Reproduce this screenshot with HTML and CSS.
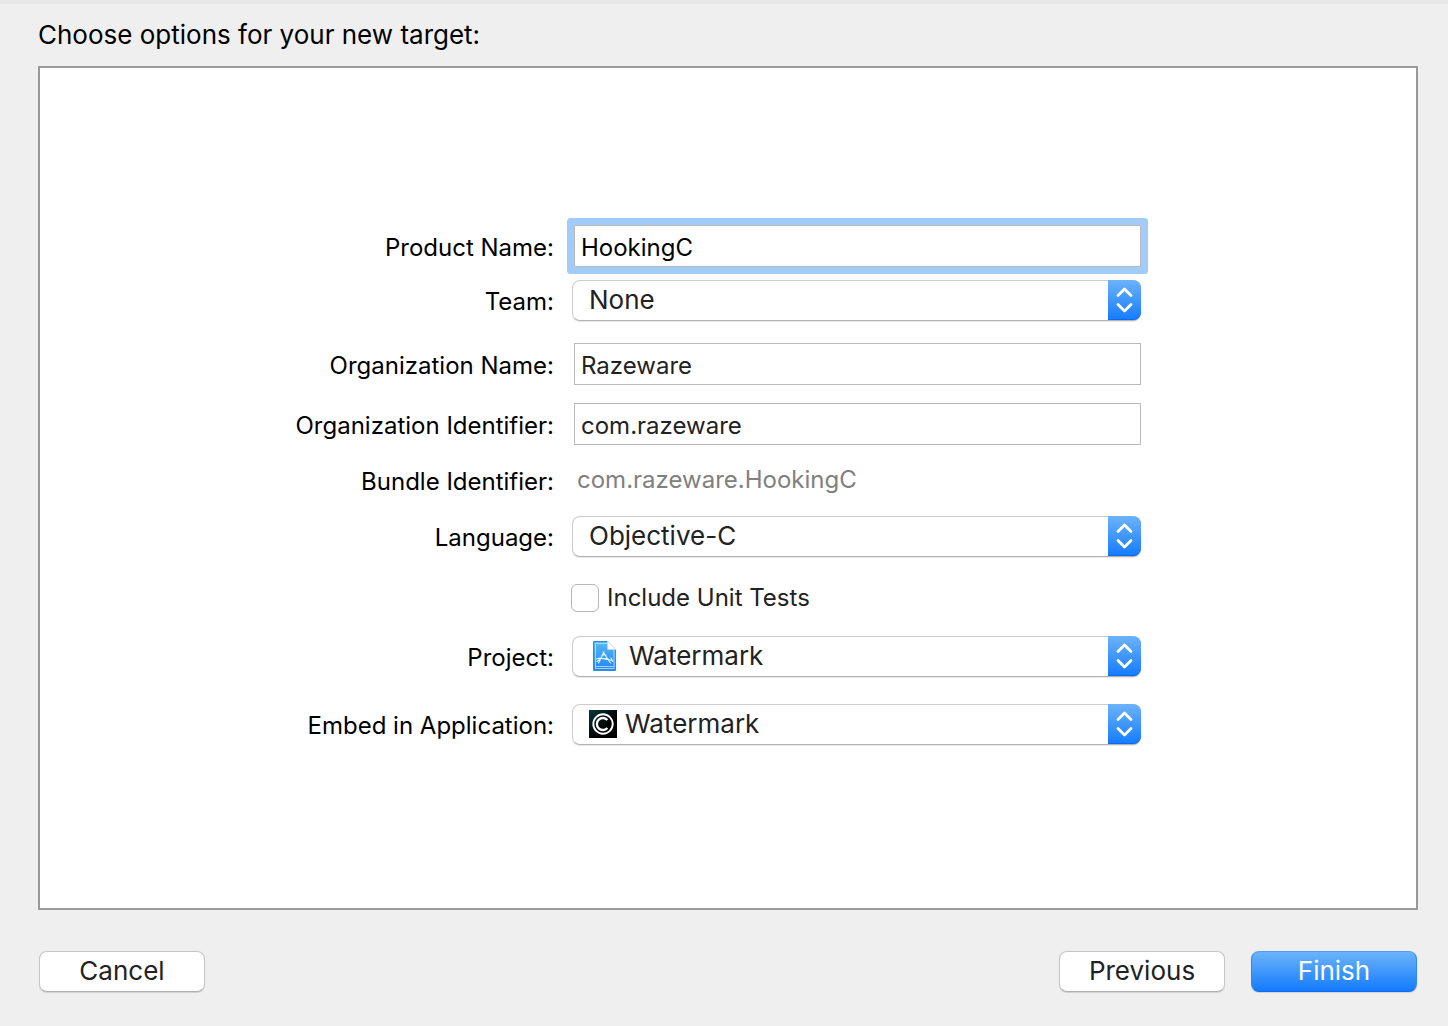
FILE: index.html
```html
<!DOCTYPE html>
<html lang="en">
<head>
<meta charset="utf-8">
<meta name="viewport" content="width=device-width, initial-scale=1">
<title>New Target</title>
<link rel="stylesheet" href="styles.css">
</head>
<body>
<svg class="sprite" aria-hidden="true">
  <symbol id="stepper" viewBox="0 0 33 40">
    <path d="M10 15.500l6.500-6.500 6.500 6.500M10 24.500l6.500 6.500 6.500-6.500" fill="none" stroke="#fff" stroke-width="2.800" stroke-linecap="round" stroke-linejoin="round"/>
  </symbol>
</svg>
<form class="sheet">
  <h1 class="title">Choose options for your new target:</h1>
  <main class="panel">
    <div class="row">
      <label class="label" for="product">Product Name:</label>
      <input class="field focused" id="product" type="text" value="HookingC">
    </div>
    <div class="row tight">
      <label class="label" for="team">Team:</label>
      <div class="popup">
        <select class="select" id="team"><option>None</option></select>
        <svg class="stepper" aria-hidden="true"><use href="#stepper"/></svg>
      </div>
    </div>
    <div class="row loose">
      <label class="label" for="org">Organization Name:</label>
      <input class="field" id="org" type="text" value="Razeware">
    </div>
    <div class="row medium">
      <label class="label" for="orgid">Organization Identifier:</label>
      <input class="field" id="orgid" type="text" value="com.razeware">
    </div>
    <div class="row">
      <label class="label" for="bundle">Bundle Identifier:</label>
      <output class="value" id="bundle">com.razeware.HookingC</output>
    </div>
    <div class="row">
      <label class="label" for="language">Language:</label>
      <div class="popup">
        <select class="select" id="language"><option>Objective-C</option></select>
        <svg class="stepper" aria-hidden="true"><use href="#stepper"/></svg>
      </div>
    </div>
    <div class="row checks">
      <label class="check"><input class="box" type="checkbox">Include Unit Tests</label>
    </div>
    <div class="row">
      <label class="label" for="project">Project:</label>
      <div class="popup">
        <svg class="icon" viewBox="0 0 32 32" aria-hidden="true">
          <defs><linearGradient id="doc" x2="0" y2="1"><stop stop-color="#55b9f3"/><stop offset="1" stop-color="#2186f5"/></linearGradient></defs>
          <path d="M6.500 1.500h14l8 8v21h-22z" fill="url(#doc)" stroke="#2c8fe0"/>
          <path d="M8.500 3.500h11.500l7 7v18H8.500zM8.500 26.500h18" fill="none" stroke="#c4e6ff" stroke-width=".8"/>
          <path d="M20.500 1l8.500 8.500h-8.500z" fill="#fff" stroke="#c9d5df" stroke-width=".7"/>
          <path d="M17 12l-5.500 11M16 12l7.500 11M9.500 19l3-1 13 2.500M15 15h4M10 21.500l4-3M24 18l1.500 3.500M14 18.500h7" fill="none" stroke="#e4f5ff" stroke-width="1.100" stroke-linecap="round"/>
        </svg>
        <select class="select with-doc" id="project"><option>Watermark</option></select>
        <svg class="stepper" aria-hidden="true"><use href="#stepper"/></svg>
      </div>
    </div>
    <div class="row wide">
      <label class="label" for="embed">Embed in Application:</label>
      <div class="popup">
        <svg class="icon" viewBox="0 0 32 32" aria-hidden="true">
          <defs><linearGradient id="app" x2="1" y2="1"><stop stop-color="#063a3c"/><stop offset=".6" stop-color="#000"/></linearGradient></defs>
          <path d="M2 2h28v28H2z" fill="url(#app)"/>
          <circle cx="16" cy="16" r="9.700" fill="none" stroke="#fff" stroke-width="1.900"/>
          <path d="M20.400 12a6 6 0 1 0 0 8" fill="none" stroke="#fff" stroke-width="2.300"/>
        </svg>
        <select class="select with-app" id="embed"><option>Watermark</option></select>
        <svg class="stepper" aria-hidden="true"><use href="#stepper"/></svg>
      </div>
    </div>
  </main>
  <footer class="actions">
    <button class="button" type="button">Cancel</button>
    <div class="forward">
      <button class="button" type="button">Previous</button>
      <button class="button primary" type="submit">Finish</button>
    </div>
  </footer>
</form>
</body>
</html>
```
FILE: styles.css
```css
* { box-sizing: border-box; }

body {
  margin: 0;
  background: #efefef;
  color: #000;
  font: 24px/30px Inter, "Liberation Sans", sans-serif;
}

.sprite { display: none; }

.sheet {
  display: flex;
  flex-direction: column;
  min-height: 100vh;
  padding: 16px 30px 34px 38px;
  border-top: 4px solid #e6e6e6;
}

.title {
  margin: 0 0 16px;
  font-size: 26px;
  font-weight: 400;
  line-height: 30px;
}

.panel {
  flex: 1;
  padding: 157px 275px 156px 0;
  border: 2px solid #999;
  background: #fff;
}

.row {
  display: grid;
  grid-template-columns: 1fr 569px;
  column-gap: 18px;
  align-items: center;
  height: 42px;
  margin-top: 14px;
}
.row:first-child { margin-top: 0; }
.tight { margin-top: 12px; }
.medium { margin-top: 18px; }
.checks { margin-top: 20px; margin-bottom: 16px; }
.checks + .row { margin-top: 0; }
.loose { margin-top: 22px; }
.wide { margin-top: 26px; }

.label {
  padding-top: 4px;
  text-align: right;
  white-space: nowrap;
}

.field {
  height: 42px;
  min-width: 0;
  margin: 0 0 0 2px;
  padding: 2px 6px 0;
  border: 1px solid #bbb;
  border-radius: 0;
  outline: 0;
  background: #fff;
  color: #222;
  font: inherit;
}
.focused {
  border-color: #b8b8b8;
  color: #000;
  box-shadow: 0 0 0 7px #a1ccfa;
  border-radius: 1px;
}

.value {
  padding-left: 5px;
  color: #808080;
}

.popup { position: relative; }

.select {
  display: block;
  width: 100%;
  height: 41px;
  padding: 0 40px 0 16px;
  appearance: none;
  border: 1px solid #cdcdcd;
  border-bottom-color: #b3b3b3;
  border-radius: 8px;
  background: #fff;
  box-shadow: 0 1px 1px #0000001a;
  color: #222;
  font: inherit;
  font-size: 26px;
}
.with-doc { padding-left: 56px; }
.with-app { padding-left: 52px; }

.stepper {
  position: absolute;
  top: 0;
  right: 0;
  width: 33px;
  height: 40px;
  border-radius: 0 8px 8px 0;
  background: linear-gradient(#6cb3f9, #147bfd);
  box-shadow: inset 0 -1px #0d6af0;
  pointer-events: none;
}

.icon {
  position: absolute;
  top: 4px;
  left: 15px;
  width: 32px;
  height: 32px;
  pointer-events: none;
}

.check {
  display: flex;
  grid-column: 2;
  align-items: center;
  gap: 8px;
  color: #222;
}
.box {
  width: 28px;
  height: 28px;
  margin: 0 0 0 -1px;
  appearance: none;
  border: 1px solid #b5b5b5;
  border-radius: 6px;
  background: #fff;
}

.actions {
  display: flex;
  justify-content: space-between;
  padding: 41px 1px 0;
}
.forward {
  display: flex;
  gap: 26px;
}
.button {
  width: 166px;
  height: 41px;
  padding: 0 0 2px;
  border: 1px solid #c6c6c6;
  border-bottom-color: #b0b0b0;
  border-radius: 8px;
  background: #fff;
  box-shadow: 0 1px 1px #00000020;
  color: #222;
  font: inherit;
  font-size: 26px;
}
.primary {
  border-color: #4b9ff5 #2c8af8 #0f6cf2;
  background: linear-gradient(#6cb3f9, #147bfd);
  color: #fff;
}
```
